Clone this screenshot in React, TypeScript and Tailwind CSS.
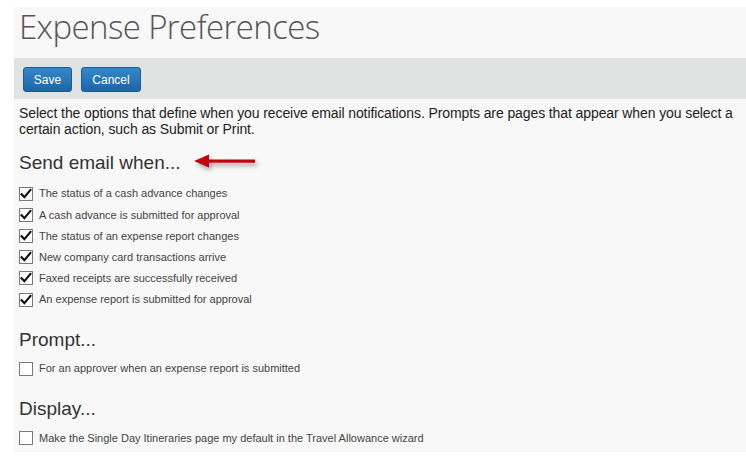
import React from 'react';

const EMAIL_OPTIONS = [
  'The status of a cash advance changes',
  'A cash advance is submitted for approval',
  'The status of an expense report changes',
  'New company card transactions arrive',
  'Faxed receipts are successfully received',
  'An expense report is submitted for approval',
];

function Checkbox({ checked }: { checked: boolean }) {
  return (
    <svg width="14" height="14" viewBox="0 0 14 14" className="shrink-0">
      <rect x="0.5" y="0.5" width="13" height="13" fill="#fff" stroke="#7a7a7a" />
      {checked && (
        <path d="M2.6 7.2 L5.4 10.2 L11.4 3" fill="none" stroke="#111" strokeWidth="2.2" strokeLinecap="square" />
      )}
    </svg>
  );
}

function Option({ label, checked }: { label: string; checked: boolean }) {
  return (
    <label className="flex items-center gap-[6px] h-[21.2px] text-[11px] text-[#444]">
      <Checkbox checked={checked} />
      <span>{label}</span>
    </label>
  );
}

function RedArrow() {
  return (
    <svg width="66" height="20" viewBox="0 0 66 20" className="ml-[12px] drop-shadow-[2px_3px_2px_rgba(0,0,0,0.35)]">
      <polygon points="1,8 16,1.5 16,14.5" fill="#c4000f" />
      <rect x="14" y="6.5" width="48" height="3.2" fill="#c4000f" />
    </svg>
  );
}

export default function App() {
  return (
    <div className="w-[746px] h-[461px] bg-white pt-[7px] pl-[14px] font-['Liberation_Sans',Arial,sans-serif]">
      <div className="h-[445px] bg-[#f8f8f8]">
        {/* page title */}
        <div className="h-[51px] pl-[5px]">
          <h1 className="font-['Open_Sans',sans-serif] font-light text-[33px] leading-[40px] tracking-[-0.6px] text-[#555]">
            Expense Preferences
          </h1>
        </div>

        {/* toolbar */}
        <div className="h-[41px] bg-[#e1e2e2] flex items-start gap-[9px] pl-[9px] pt-[9px]">
          <button className="h-[25px] w-[49px] rounded-[3px] border border-[#1c5a94] bg-gradient-to-b from-[#3389cc] to-[#1e65a6] text-white text-[12px]">
            Save
          </button>
          <button className="h-[25px] w-[60px] rounded-[3px] border border-[#1c5a94] bg-gradient-to-b from-[#3389cc] to-[#1e65a6] text-white text-[12px]">
            Cancel
          </button>
        </div>

        <div className="pl-[5px] pr-[4px]">
          <p className="mt-[6px] text-[14px] leading-[16px] tracking-[-0.1px] text-[#222]">
            Select the options that define when you receive email notifications. Prompts are pages that appear when you select a
            <br />
            certain action, such as Submit or Print.
          </p>

          <div className="mt-[15px] flex items-center h-[22px]">
            <h2 className="text-[19px] leading-[22px] text-[#333]">Send email when...</h2>
            <RedArrow />
          </div>
          <div className="mt-[9px]">
            {EMAIL_OPTIONS.map((o) => (
              <Option key={o} label={o} checked />
            ))}
          </div>

          <h2 className="mt-[19px] text-[19px] leading-[22px] text-[#333]">Prompt...</h2>
          <div className="mt-[7px]">
            <Option label="For an approver when an expense report is submitted" checked={false} />
          </div>

          <h2 className="mt-[19px] text-[19px] leading-[22px] text-[#333]">Display...</h2>
          <div className="mt-[7px]">
            <Option label="Make the Single Day Itineraries page my default in the Travel Allowance wizard" checked={false} />
          </div>
        </div>
      </div>
    </div>
  );
}
